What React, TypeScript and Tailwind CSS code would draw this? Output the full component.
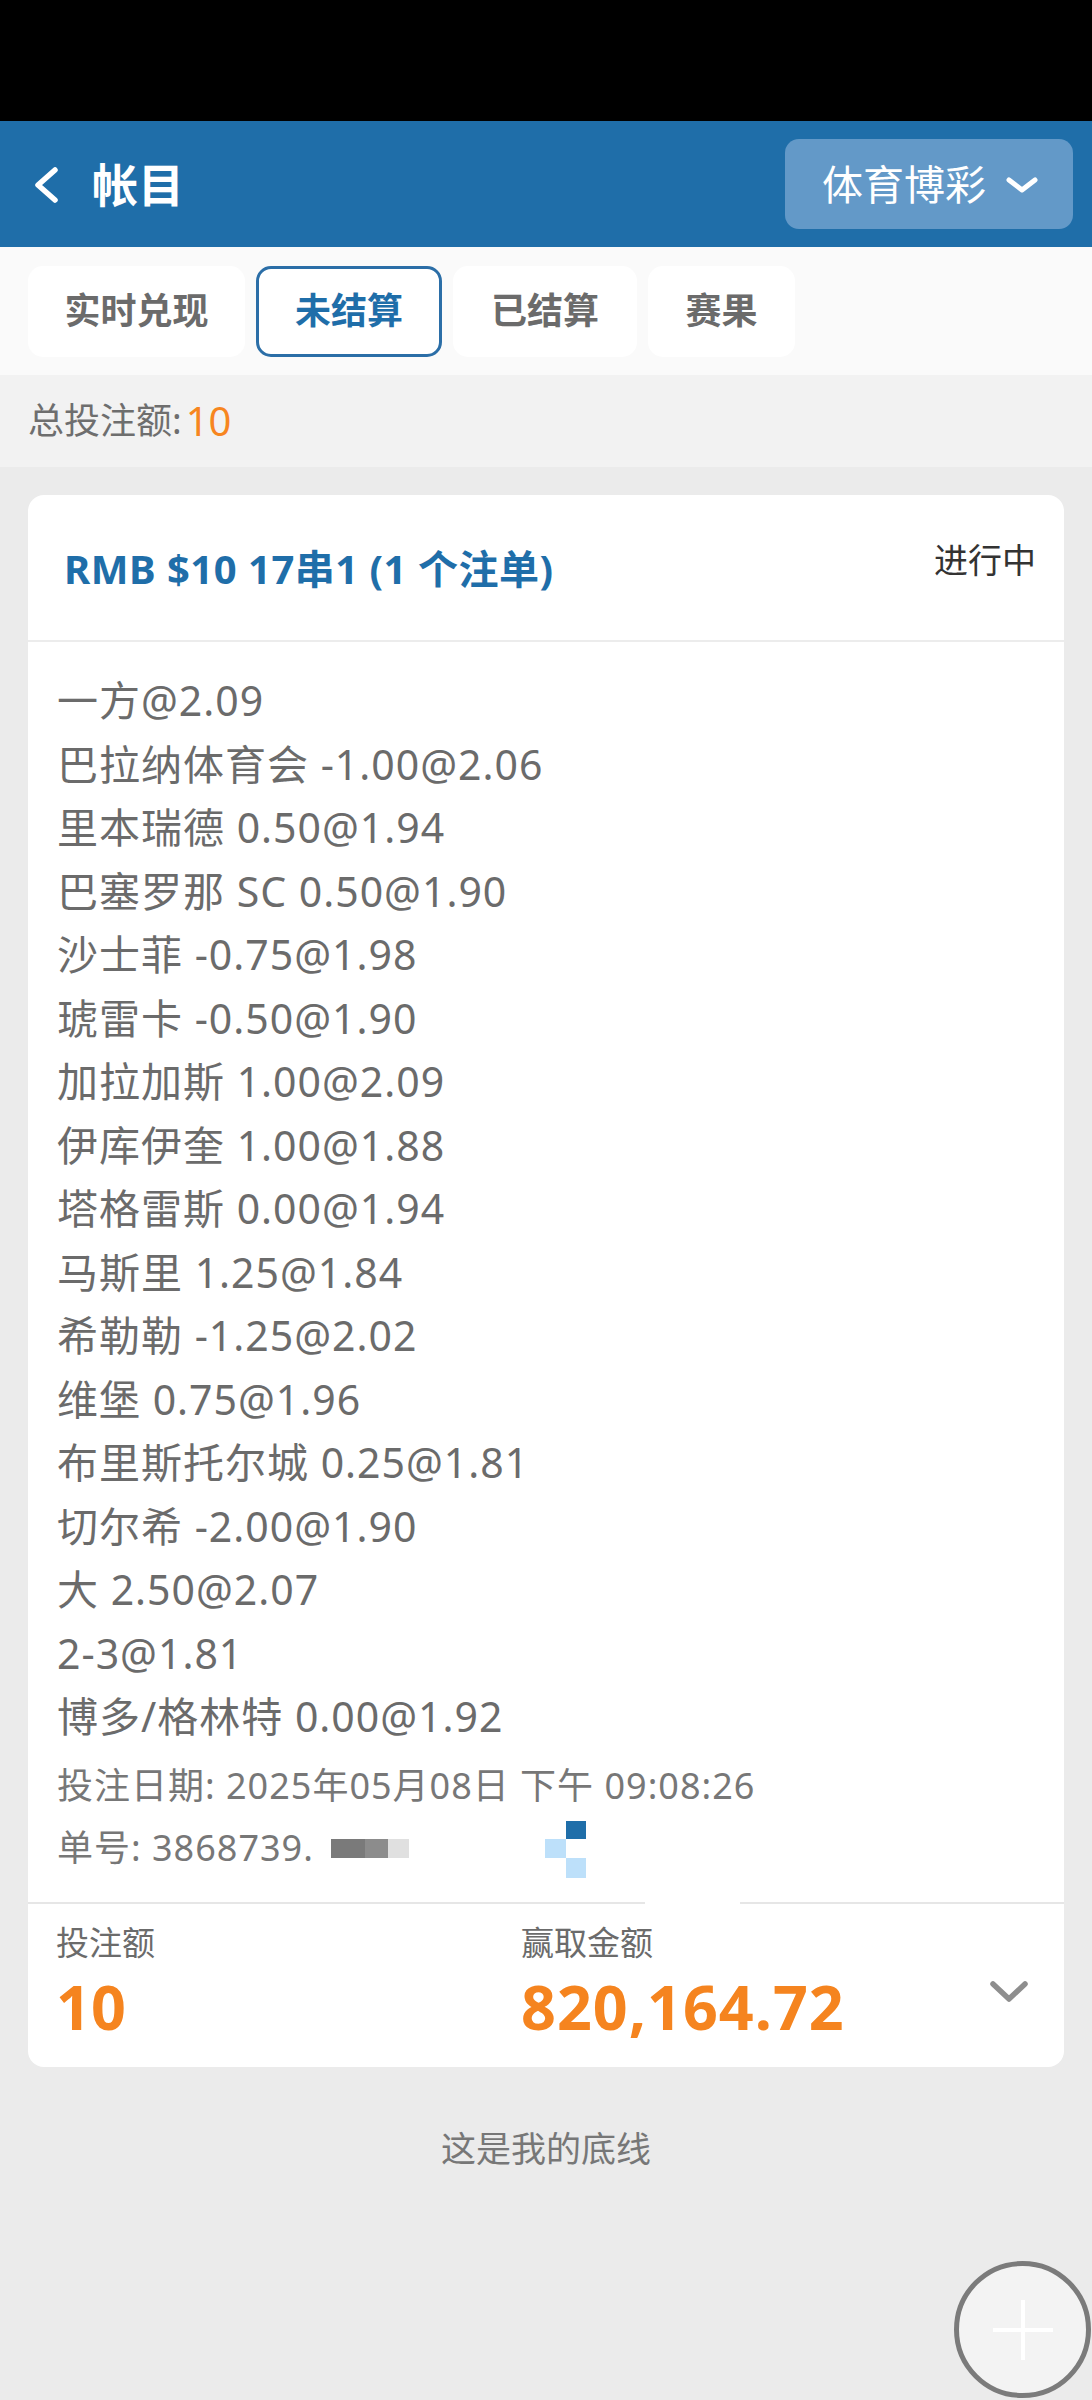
const selections = [
  "一方@2.09",
  "巴拉纳体育会 -1.00@2.06",
  "里本瑞德 0.50@1.94",
  "巴塞罗那 SC 0.50@1.90",
  "沙士菲 -0.75@1.98",
  "琥雷卡 -0.50@1.90",
  "加拉加斯 1.00@2.09",
  "伊库伊奎 1.00@1.88",
  "塔格雷斯 0.00@1.94",
  "马斯里 1.25@1.84",
  "希勒勒 -1.25@2.02",
  "维堡 0.75@1.96",
  "布里斯托尔城 0.25@1.81",
  "切尔希 -2.00@1.90",
  "大 2.50@2.07",
  "2-3@1.81",
  "博多/格林特 0.00@1.92",
];

const tabs = [
  { label: "实时兑现", w: "w-[217px]" },
  { label: "未结算", w: "w-[186px]", active: true },
  { label: "已结算", w: "w-[184px]" },
  { label: "赛果", w: "w-[147px]" },
];

function TopBar() {
  return (
    <div className="h-[126px] bg-[#1f6ea9] flex items-center justify-between pl-[33px] pr-[19px]">
      <div className="flex items-center">
        <svg width="26" height="36" viewBox="0 0 26 36" className="mt-[2px]">
          <polyline points="22,3 5,18 22,33" fill="none" stroke="white" strokeWidth="5.5" strokeLinecap="round" strokeLinejoin="round" />
        </svg>
        <span className="ml-[33px] text-white text-[46px] font-bold leading-none">帐目</span>
      </div>
      <div className="w-[288px] h-[90px] rounded-[14px] bg-[#6399c8] flex items-center pl-[37px]">
        <span className="text-white text-[41px] leading-none">体育博彩</span>
        <svg width="34" height="18" viewBox="0 0 34 18" className="ml-[19px] mt-[2px]">
          <polyline points="4,4 17,14 30,4" fill="none" stroke="white" strokeWidth="5" strokeLinecap="round" strokeLinejoin="round" />
        </svg>
      </div>
    </div>
  );
}

function Tabs() {
  return (
    <div className="h-[128px] bg-[#fafafa] flex items-center gap-[11px] px-[28px]">
      {tabs.map((t) => (
        <div
          key={t.label}
          className={
            t.active
              ? `${t.w} h-[91px] rounded-[15px] bg-white border-[3px] border-[#2b6ea7] flex items-center justify-center text-[36px] font-bold text-[#1f6ea9]`
              : `${t.w} h-[91px] rounded-[15px] bg-white flex items-center justify-center text-[36px] font-bold text-[#6b6b6b]`
          }
        >
          {t.label}
        </div>
      ))}
    </div>
  );
}

export default function App() {
  return (
    <div className="relative w-[1092px] min-h-[2400px] overflow-hidden bg-[#ebebeb] font-['Noto_Sans','Noto_Sans_CJK_SC',sans-serif]">
      <div className="h-[121px] bg-black" />
      <TopBar />
      <Tabs />

      <div className="h-[92px] bg-[#f2f2f2] flex items-center px-[28px] text-[36px] text-[#6e6e6e]">
        总投注额:<span className="ml-[4px] text-[40px] text-[#f7861f]">10</span>
      </div>

      <div className="mx-[28px] mt-[28px] bg-white rounded-[16px]">
        <div className="h-[145px] flex items-center justify-between pl-[36px] pr-[28px]">
          <div className="font-bold text-[40px] tracking-[0.5px] text-[#1f6ea9] leading-none mt-[2px]">
            RMB $10 17串1 (1 个注单)
          </div>
          <span className="text-[34px] text-[#333] leading-none mb-[16px]">进行中</span>
        </div>
        <div className="h-[2px] bg-[#ececec]" />

        <div className="pt-[27px] px-[29px] text-[41px] tracking-[1px] leading-[63.5px] text-[#6b6b6b]">
          {selections.map((s) => (
            <div key={s}>{s}</div>
          ))}
        </div>

        <div className="mt-[6px] pb-[23px] px-[29px] text-[36px] tracking-[1px] leading-[62px] text-[#777]">
          <div>投注日期: 2025年05月08日 下午 09:08:26</div>
          <div className="relative">
            单号: 3868739.
            <div className="absolute left-[274px] top-[22px] flex h-[19px]">
              <div className="w-[34px] bg-[#7a7a7a]" />
              <div className="w-[23px] bg-[#8c8c8c]" />
              <div className="w-[21px] bg-[#e0e0e0]" />
            </div>
            <div className="absolute left-[488px] top-[4px] grid grid-cols-[21px_20px] grid-rows-[18px_19px_20px]">
              <div />
              <div className="bg-[#1f6ea9]" />
              <div className="bg-[#bde0fa]" />
              <div />
              <div />
              <div className="bg-[#bde0fa]" />
            </div>
          </div>
        </div>

        <div className="flex h-[2px]">
          <div className="w-[617px] bg-[#e6e6e6]" />
          <div className="w-[95px] bg-white" />
          <div className="flex-1 bg-[#e6e6e6]" />
        </div>

        <div className="flex items-start pt-[19px] pb-[28px] pl-[28px] pr-[34px]">
          <div className="w-[465px]">
            <div className="text-[33px] leading-[40px] text-[#6b6b6b]">投注额</div>
            <div className="mt-[12px] text-[61px] leading-[64px] font-bold text-[#f5841f]">10</div>
          </div>
          <div className="flex-1">
            <div className="text-[33px] leading-[40px] text-[#6b6b6b]">赢取金额</div>
            <div className="mt-[12px] text-[61px] tracking-[1px] leading-[64px] font-bold text-[#f5841f]">820,164.72</div>
          </div>
          <svg width="42" height="28" viewBox="0 0 42 28" className="mt-[56px]">
            <polyline points="5,5 21,20 37,5" fill="none" stroke="#8e8e8e" strokeWidth="5.5" strokeLinecap="round" strokeLinejoin="round" />
          </svg>
        </div>
      </div>

      <div className="mt-[62px] text-center text-[35px] leading-[40px] text-[#777]">这是我的底线</div>

      <div className="absolute left-[954px] top-[2261px] w-[137px] h-[137px] rounded-full border-[5px] border-[#7b7b7b] bg-[#f3f3f3] flex items-center justify-center">
        <svg width="64" height="64" viewBox="0 0 64 64">
          <line x1="32" y1="2" x2="32" y2="62" stroke="white" strokeWidth="4" />
          <line x1="2" y1="32" x2="62" y2="32" stroke="white" strokeWidth="4" />
        </svg>
      </div>
    </div>
  );
}
